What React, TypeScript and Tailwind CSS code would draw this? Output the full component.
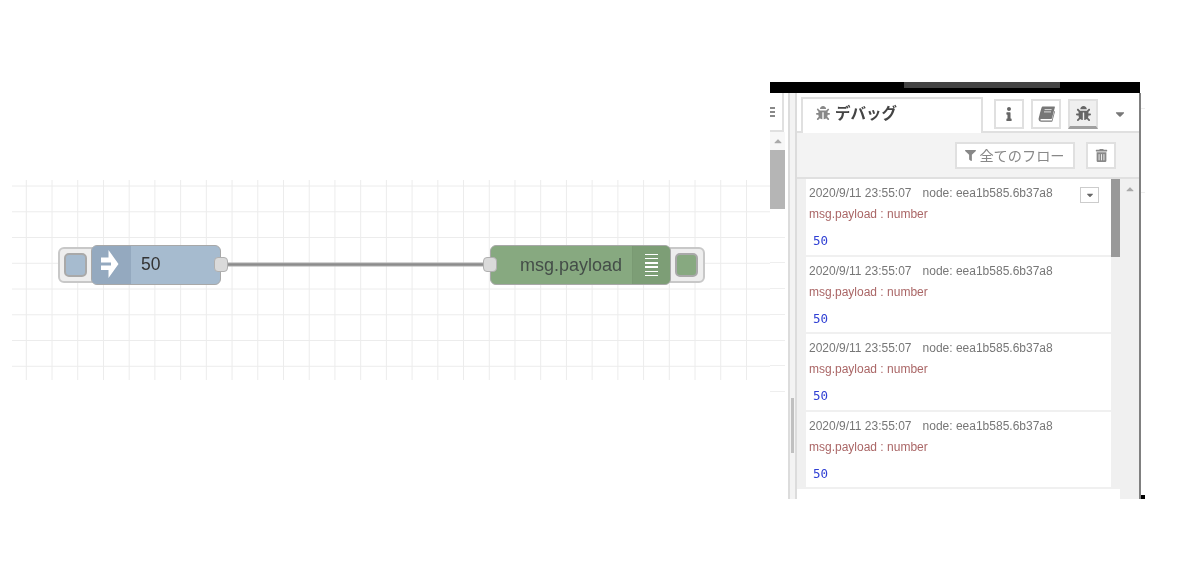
import React from "react";
import { FaBug, FaInfo, FaTrashAlt, FaFilter, FaCaretDown, FaCaretUp } from "react-icons/fa";

const sans = "font-['Liberation_Sans',Arial,sans-serif]";

function Grid() {
  const xs = Array.from({ length: 29 }, (_, i) => 26.3 + i * 25.72);
  const ys = Array.from({ length: 8 }, (_, i) => 186 + i * 25.75);
  return (
    <svg className="absolute left-0 top-[98px]" width="770" height="200" viewBox="0 180 770 200">
      {xs.map((x) => (
        <line key={x} x1={x} x2={x} y1="180" y2="380" stroke="#ececec" strokeWidth="1" />
      ))}
      {ys.map((y) => (
        <line key={y} x1="12" x2="770" y1={y} y2={y} stroke="#ececec" strokeWidth="1" />
      ))}
      <line x1="226" x2="486" y1="264.5" y2="264.5" stroke="#ababab" strokeWidth="4" />
      <line x1="226" x2="486" y1="264.5" y2="264.5" stroke="#8c8c8c" strokeWidth="2" />
    </svg>
  );
}

function Port({ className }: { className: string }) {
  return (
    <div className={`absolute h-[15px] w-[14px] rounded-[4px] border border-[#b0b0b0] bg-[#dadada] ${className}`} />
  );
}

function InjectNode() {
  return (
    <>
      <div className="absolute left-[58px] top-[165px] flex h-[36px] w-[40px] items-center rounded-[6px] border-2 border-[#c8c8c8] bg-[#eeeeee] pl-[4px]">
        <div className="h-[24px] w-[23px] rounded-[5px] border-2 border-[#a9a9a9] bg-[#a6bbcf]" />
      </div>
      <div className="absolute left-[91px] top-[163px] flex h-[40px] w-[130px] items-center overflow-hidden rounded-[6px] border border-[#a8a8a8] bg-[#a6bbcf]">
        <div className="flex h-full w-[39px] items-center justify-center bg-[#94a9bf]">
          <svg width="18" height="30" viewBox="0 0 18 30" className="ml-[-3px] mt-[-2px]">
            <path d="M0 8.5h7.5V1L17.5 15 7.5 29v-8H0v-4.6h10V13.4H0z" fill="#ffffff" />
          </svg>
        </div>
        <span className={`ml-[10px] text-[17.5px] leading-none text-[#333333] ${sans}`}>50</span>
      </div>
      <Port className="left-[214px] top-[175px]" />
    </>
  );
}

function DebugNode() {
  return (
    <>
      <div className="absolute left-[664px] top-[165px] flex h-[36px] w-[41px] items-center justify-end rounded-[6px] border-2 border-[#c8c8c8] bg-[#eeeeee] pr-[5px]">
        <div className="h-[24px] w-[23px] rounded-[5px] border-2 border-[#a9a9a9] bg-[#87a980]" />
      </div>
      <div className="absolute left-[490px] top-[163px] flex h-[40px] w-[181px] items-center overflow-hidden rounded-[6px] border border-[#a8a8a8] bg-[#87a980]">
        <span className={`ml-[29px] w-[112px] text-[18px] leading-none text-[#444d48] ${sans}`}>msg.payload</span>
        <div className="flex h-full flex-1 flex-col items-center justify-center gap-[2.8px] border-l border-[#7a9a73] bg-[#7d9e76]">
          {[0, 1, 2, 3, 4, 5].map((i) => (
            <div key={i} className="h-[1.4px] w-[13px] bg-white" />
          ))}
        </div>
      </div>
      <Port className="left-[483px] top-[175px]" />
    </>
  );
}

function IconButton({ children, active }: { children: React.ReactNode; active?: boolean }) {
  return (
    <div
      className={`flex h-[30px] w-[30px] items-center justify-center border-2 ${
        active ? "border-[#e0e0e0] border-b-[3px] border-b-[#a0a0a0] bg-[#efefef]" : "border-[#e0e0e0] bg-white"
      } text-[#666666]`}
    >
      {children}
    </div>
  );
}

function SlantedBook() {
  return (
    <svg width="17" height="16" viewBox="0 0 17 16">
      <path
        d="M5 .5h11.4c.4 0 .6.3.5.7L13.9 12.4c-.1.3-.3.5-.7.5H3.6c-1 0-1.3.5-1.2 1 .1.4.5.7 1.2.7h10.2l2.6-9.8.6.6-2.6 9.8c-.1.3-.3.5-.7.5H3.4C1.7 15.7.5 14.6.6 13 .7 12 2.9 3.6 3.6 1.6 3.8 1 4.3.5 5 .5z"
        fill="#777777"
      />
      <path d="M6.6 3.6h7M6 5.9h7" stroke="#dddddd" strokeWidth="1" />
    </svg>
  );
}

function Row({ first }: { first?: boolean }) {
  return (
    <div className="relative h-[77.5px] border-b-2 border-[#f0f0f0] bg-white pl-[3px]">
      <div className={`flex h-[28px] items-center text-[12px] text-[#777777] ${sans}`}>
        <span>2020/9/11 23:55:07</span>
        <span className="ml-[11px]">node: eea1b585.6b37a8</span>
      </div>
      <div className={`flex h-[14px] items-center text-[12px] leading-none text-[#aa6666] ${sans}`}>msg.payload : number</div>
      <div className="mt-[12px] pl-[4px] font-['DejaVu_Sans_Mono',monospace] text-[12.5px] leading-[16px] text-[#3040d4]">50</div>
      {first && (
        <div className="absolute left-[274px] top-[8px] flex h-[16px] w-[19px] items-center justify-center border border-[#cccccc] bg-white text-[#666666]">
          <FaCaretDown size={10} />
        </div>
      )}
    </div>
  );
}

function LeftEdge() {
  return (
    <div className="flex w-[18px] flex-col">
      <div className="flex h-[39px] w-[14px] items-center border-b-2 border-r-2 border-[#e0e0e0] bg-white">
        <div className="flex w-[5px] flex-col gap-[2px]">
          <div className="h-[2px] w-[5px] bg-[#888888]" />
          <div className="h-[2px] w-[5px] bg-[#888888]" />
          <div className="h-[2px] w-[5px] bg-[#888888]" />
        </div>
      </div>
      <div className="flex h-[18px] w-[15px] items-center justify-center bg-[#f7f7f7] text-[#aaaaaa]">
        <FaCaretUp size={12} />
      </div>
      <div className="h-[59px] w-[15px] bg-[#b5b5b5]" />
      <div className="mt-[-23px] flex w-[15px] flex-col">
        {[0, 1, 2, 3, 4, 5, 6, 7].map((i) => (
          <div key={i} className={`h-[25.75px] border-b border-[#eeeeee] ${i < 1 ? "invisible" : ""}`} />
        ))}
      </div>
    </div>
  );
}

function DebugPanel() {
  return (
    <div className="flex h-[417px] w-[375px] flex-col">
      <div className="h-[11px] w-[370px] shrink-0 bg-black">
        <div className="ml-[134px] h-[6px] w-[156px] bg-[#444444]" />
      </div>
      <div className="flex min-h-0 flex-1">
        <LeftEdge />
        <div className="relative w-[9px] border-x-2 border-[#dcdcdc] bg-[#f3f3f3]">
          <div className="absolute left-[1px] top-[305px] h-[55px] w-[3px] bg-[#c0c0c0]" />
        </div>
        <div className="flex w-[342px] flex-col">
          <div className="flex h-[40px] shrink-0 items-end border-b-2 border-[#e0e0e0] bg-white pl-[4px]">
            <div className="mb-[-2px] flex h-[36px] w-[182px] items-center border-x-2 border-t-2 border-[#e0e0e0] bg-white pb-[6px] pl-[13px]">
              <FaBug size={14} className="text-[#888888]" />
              <span className="ml-[5px] font-['Noto_Sans_CJK_JP','Liberation_Sans',sans-serif] text-[15.5px] font-bold leading-none text-[#444444]">
                デバッグ
              </span>
            </div>
            <div className="mb-[2px] ml-[11px] flex items-center gap-[7px]">
              <IconButton><FaInfo size={14} /></IconButton>
              <IconButton><SlantedBook /></IconButton>
              <IconButton active><FaBug size={15} /></IconButton>
              <FaCaretDown size={14} className="ml-[8px] text-[#777777]" />
            </div>
          </div>
          <div className="flex h-[46px] shrink-0 items-center justify-end gap-[11px] border-b-2 border-[#e0e0e0] bg-[#f3f3f3] pr-[23px]">
            <div className="flex h-[27px] w-[120px] items-center justify-center gap-[3px] border-2 border-[#e0e0e0] bg-white text-[#888888]">
              <FaFilter size={11} />
              <span className="font-['Noto_Sans_CJK_JP','Liberation_Sans',sans-serif] text-[14.2px] leading-none">全てのフロー</span>
            </div>
            <div className="flex h-[27px] w-[30px] items-center justify-center border-2 border-[#e0e0e0] bg-white text-[#888888]">
              <FaTrashAlt size={13} />
            </div>
          </div>
          <div className="flex min-h-0 flex-1 bg-[#f0f0f0]">
            <div className="flex w-[323px] flex-col bg-white">
              <div className="flex h-[310px] bg-[#f0f0f0]">
                <div className="ml-[9px] w-[305px]">
                  <Row first />
                  <Row />
                  <Row />
                  <Row />
                </div>
                <div className="h-[78px] w-[9px] bg-[#999999]" />
              </div>
            </div>
            <div className="flex h-[20px] flex-1 items-center justify-center text-[#aaaaaa]">
              <FaCaretUp size={12} />
            </div>
          </div>
        </div>
        <div className="flex w-[6px] flex-col border-l-2 border-[#808080]">
          <div className="mt-[15px] h-px bg-[#eeeeee]" />
          <div className="mt-[83px] h-px bg-[#eeeeee]" />
          <div className="flex-1" />
          <div className="h-[4px] bg-black" />
        </div>
      </div>
    </div>
  );
}

export default function App() {
  return (
    <div className="flex h-[572px] w-[1183px] items-start overflow-hidden bg-white pt-[82px] blur-[0.4px]">
      <div className="relative h-[417px] w-[770px] shrink-0">
        <Grid />
        <InjectNode />
        <DebugNode />
      </div>
      <DebugPanel />
    </div>
  );
}
